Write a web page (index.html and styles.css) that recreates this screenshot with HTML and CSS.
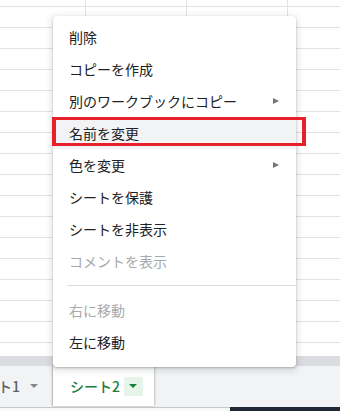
FILE: index.html
```html
<!DOCTYPE html>
<html lang="ja">
<head>
<meta charset="utf-8">
<link rel="stylesheet" href="styles.css">
</head>
<body>
<div class="app">
  <div class="sheet"></div>
  <div class="scrollbar"></div>
  <div class="tabbar">
    <div class="tab tab-inactive">
      <span class="tab-label">シート1</span>
      <span class="tab-drop"><span class="caret"></span></span>
    </div>
    <div class="tab tab-active">
      <span class="tab-label">シート2</span>
      <span class="tab-drop"><span class="caret"></span></span>
    </div>
  </div>
  <div class="footer">
    <div class="footer-left"></div>
    <div class="footer-right"></div>
  </div>

  <div class="menu">
    <div class="item">削除</div>
    <div class="item">コピーを作成</div>
    <div class="item has-sub">別のワークブックにコピー<span class="sub-arrow"></span></div>
    <div class="item hover">名前を変更<span class="highlight-box"></span></div>
    <div class="item has-sub">色を変更<span class="sub-arrow"></span></div>
    <div class="item">シートを保護</div>
    <div class="item">シートを非表示</div>
    <div class="item disabled">コメントを表示</div>
    <div class="divider"></div>
    <div class="item disabled">右に移動</div>
    <div class="item">左に移動</div>
  </div>
</div>
</body>
</html>
```
FILE: styles.css
```css
html, body {
  margin: 0;
  padding: 0;
}
body {
  font-family: "Noto Sans CJK JP", "Noto Sans", "Liberation Sans", sans-serif;
  background: #ffffff;
}
.app {
  position: relative;
  width: 340px;
  height: 411px;
  overflow: hidden;
}
.sheet {
  height: 356px;
  background-color: #ffffff;
  background-image:
    linear-gradient(to right, #e2e3e3 1px, transparent 1px),
    linear-gradient(to bottom, #e2e3e3 1px, transparent 1px);
  background-size: 101px 100%, 100% 21px;
  background-position: 85px 0, 0 6px;
}
.scrollbar {
  height: 10px;
  background: #dadce0;
}
.tabbar {
  height: 41px;
  background: #f1f3f4;
  display: flex;
}
.tab {
  display: flex;
  align-items: center;
  height: 40px;
  font-size: 14px;
  box-sizing: border-box;
}
.tab-inactive {
  width: 53px;
  overflow: hidden;
  justify-content: flex-end;
  padding-right: 10px;
  color: #5f6368;
  box-shadow: inset -1px 0 0 #dadce0;
}
.tab-active {
  width: 101px;
  background: #ffffff;
  color: #188038;
  padding-left: 17px;
  box-shadow: 1px 0 2px rgba(60, 64, 67, 0.25), -1px 0 2px rgba(60, 64, 67, 0.25);
}
.tab-label {
  white-space: nowrap;
  flex: none;
  font-weight: 500;
}
.tab-drop {
  flex: none;
  width: 19px;
  height: 19px;
  margin-left: 4px;
  border-radius: 2px;
  display: flex;
  align-items: center;
  justify-content: center;
}
.tab-active .tab-drop {
  background: #e6f4ea;
}
.caret {
  width: 0;
  height: 0;
  border-left: 4px solid transparent;
  border-right: 4px solid transparent;
  border-top: 4px solid #80868b;
}
.tab-active .caret {
  border-top-color: #188038;
}
.footer {
  display: flex;
  height: 4px;
}
.footer-left {
  width: 230px;
  border-top: 1px solid #c4c7c5;
  background: #f8f9fa;
  box-sizing: border-box;
}
.footer-right {
  flex: 1;
  background: #1f2933;
}

.menu {
  position: absolute;
  left: 53px;
  top: 16px;
  width: 243px;
  background: #ffffff;
  border-radius: 4px;
  box-shadow: 0 2px 6px 2px rgba(60, 64, 67, 0.15), 0 1px 2px rgba(60, 64, 67, 0.3);
  padding: 5px 0 9px;
}
.item {
  position: relative;
  height: 32px;
  line-height: 32px;
  padding-left: 16px;
  font-size: 14px;
  color: #202124;
  white-space: nowrap;
}
.item.disabled {
  color: #a7a9ac;
}
.item.hover {
  background: #f1f3f4;
}
.sub-arrow {
  position: absolute;
  right: 17px;
  top: 13px;
  width: 0;
  height: 0;
  border-left: 6px solid #757575;
  border-top: 3.5px solid transparent;
  border-bottom: 3.5px solid transparent;
}
.highlight-box {
  position: absolute;
  left: -1px;
  top: 0;
  width: 254px;
  height: 29px;
  border-style: solid;
  border-color: #e8202a;
  border-width: 3px 4px;
  box-sizing: border-box;
}
.divider {
  height: 1px;
  background: #dadce0;
  margin: 8px 0 8px 14px;
}
```
